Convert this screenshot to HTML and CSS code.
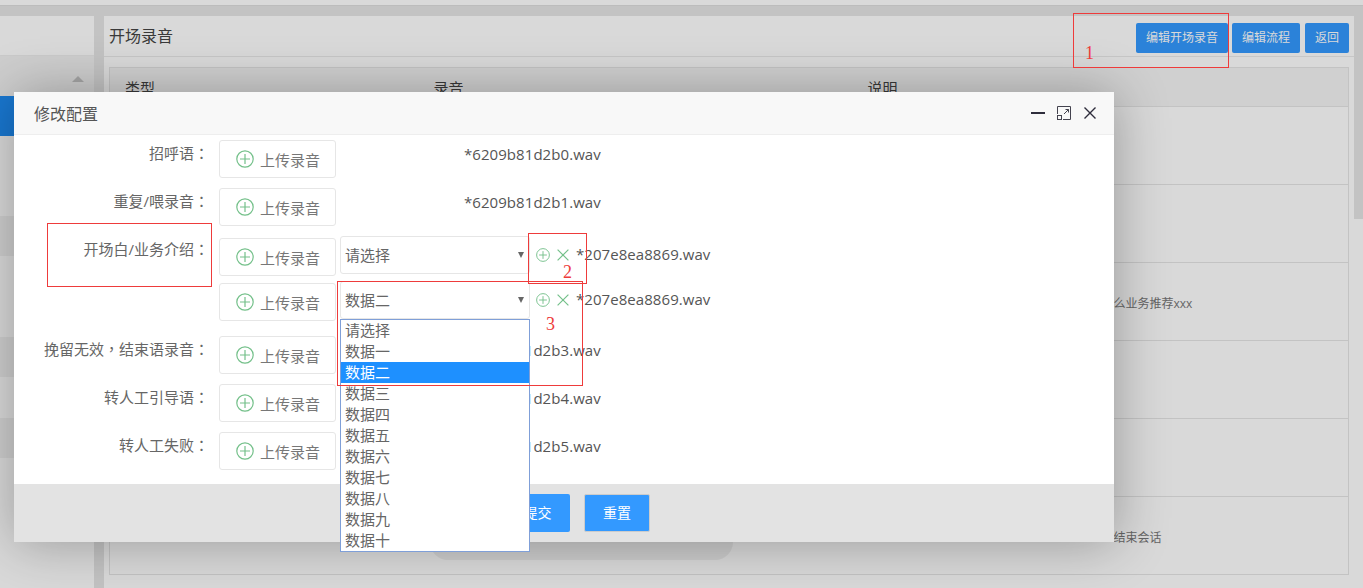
FILE: index.html
```html
<!DOCTYPE html>
<html lang="zh-CN">
<head>
  <meta charset="UTF-8" />
  <title>开场录音</title>
  <link rel="stylesheet" href="styles.css">
</head>
<body>
  <svg class="sprites" width="0" height="0">
    <symbol id="icon-plus" viewBox="0 0 18 18">
      <circle cx="9" cy="9" r="8.2" fill="none" stroke="currentColor" stroke-width="1.2" />
      <path d="M9 4v10M4 9h10" fill="none" stroke="currentColor" stroke-width="1.2" />
    </symbol>
    <symbol id="icon-del" viewBox="0 0 12 12">
      <path d="M.6.6l10.8 10.8M11.4.6L.6 11.4" fill="none" stroke="currentColor" stroke-width="1.2" />
    </symbol>
  </svg>

  <div class="topbar"></div>

  <div class="layout">
    <aside class="sidebar">
      <div class="side-head"></div>
      <div class="side-group"><span class="side-arrow"></span></div>
      <div class="side-item active"></div>
      <div class="side-item"></div>
      <div class="side-item"></div>
      <div class="side-group"></div>
      <div class="side-item"></div>
      <div class="side-item tall"></div>
      <div class="side-group"></div>
      <div class="side-item tall"></div>
      <div class="side-group"></div>
    </aside>

    <main class="panel">
      <div class="panel-head">
        <h1>开场录音</h1>
        <div class="panel-actions">
          <a class="btn">编辑开场录音</a>
          <a class="btn">编辑流程</a>
          <a class="btn">返回</a>
        </div>
      </div>
      <table class="records">
        <thead>
          <tr><th class="col-type">类型</th><th class="col-file">录音</th><th>说明</th></tr>
        </thead>
        <tbody>
          <tr><td></td><td></td><td></td></tr>
          <tr><td></td><td></td><td></td></tr>
          <tr><td></td><td></td><td class="note">么业务推荐xxx</td></tr>
          <tr><td></td><td></td><td></td></tr>
          <tr><td></td><td></td><td></td></tr>
          <tr><td></td><td></td><td class="note">结束会话</td></tr>
        </tbody>
      </table>
    </main>

    <div class="scrollbar"><div class="scroll-thumb"></div></div>
  </div>

  <div class="shade"></div>
  <div class="press-shadow"></div>

  <section class="modal">
    <header class="modal-head">
      <h2>修改配置</h2>
      <div class="modal-tools">
        <svg class="tool" width="16" height="16" viewBox="0 0 16 16"><path d="M1 8h14" stroke="#2e2d3c" stroke-width="2" fill="none" /></svg>
        <svg class="tool" width="16" height="16" viewBox="0 0 16 16"><path d="M1.5 9V1.5h13v13H7M9.5 4.5h3v3M12.5 4.5L8 9" stroke="#44434f" stroke-width="1" fill="none" /><rect x="1.5" y="10.5" width="4" height="4" stroke="#44434f" fill="none" /></svg>
        <svg class="tool" width="16" height="16" viewBox="0 0 16 16"><path d="M2.5 2.5l11 11M13.5 2.5l-11 11" stroke="#2e2d3c" stroke-width="1.4" fill="none" /></svg>
      </div>
    </header>

    <form class="modal-body">
      <div class="row">
        <label class="row-label" lang="zh-Hant">招呼语：</label>
        <a class="upload"><svg class="upload-icon"><use href="#icon-plus" /></svg>上传录音</a>
        <span class="file file-solo">*6209b81d2b0.wav</span>
      </div>
      <div class="row">
        <label class="row-label" lang="zh-Hant">重复/喂录音：</label>
        <a class="upload"><svg class="upload-icon"><use href="#icon-plus" /></svg>上传录音</a>
        <span class="file file-solo">*6209b81d2b1.wav</span>
      </div>
      <div class="row row-multi">
        <label class="row-label" lang="zh-Hant">开场白/业务介绍：</label>
        <div class="subrows">
          <div class="subrow">
            <a class="upload"><svg class="upload-icon"><use href="#icon-plus" /></svg>上传录音</a>
            <div class="picker"><span>请选择</span><i class="picker-arrow"></i></div>
            <svg class="mini-add"><use href="#icon-plus" /></svg>
            <svg class="mini-del"><use href="#icon-del" /></svg>
            <span class="file">*207e8ea8869.wav</span>
          </div>
          <div class="subrow">
            <a class="upload"><svg class="upload-icon"><use href="#icon-plus" /></svg>上传录音</a>
            <div class="picker open">
              <span>数据二</span><i class="picker-arrow"></i>
              <ul class="picker-list">
                <li>请选择</li>
                <li>数据一</li>
                <li class="selected">数据二</li>
                <li>数据三</li>
                <li>数据四</li>
                <li>数据五</li>
                <li>数据六</li>
                <li>数据七</li>
                <li>数据八</li>
                <li>数据九</li>
                <li>数据十</li>
              </ul>
            </div>
            <svg class="mini-add"><use href="#icon-plus" /></svg>
            <svg class="mini-del"><use href="#icon-del" /></svg>
            <span class="file">*207e8ea8869.wav</span>
          </div>
        </div>
      </div>
      <div class="row">
        <label class="row-label" lang="zh-Hant">挽留无效，结束语录音：</label>
        <a class="upload"><svg class="upload-icon"><use href="#icon-plus" /></svg>上传录音</a>
        <span class="file file-solo">*6209b81d2b3.wav</span>
      </div>
      <div class="row">
        <label class="row-label" lang="zh-Hant">转人工引导语：</label>
        <a class="upload"><svg class="upload-icon"><use href="#icon-plus" /></svg>上传录音</a>
        <span class="file file-solo">*6209b81d2b4.wav</span>
      </div>
      <div class="row">
        <label class="row-label" lang="zh-Hant">转人工失败：</label>
        <a class="upload"><svg class="upload-icon"><use href="#icon-plus" /></svg>上传录音</a>
        <span class="file file-solo">*6209b81d2b5.wav</span>
      </div>
    </form>

    <footer class="modal-foot">
      <a class="foot-btn">提交</a>
      <a class="foot-btn foot-btn-reset">重置</a>
    </footer>
  </section>

  <div class="mark mark-actions"><span class="mark-num">1</span></div>
  <div class="mark mark-label"></div>
  <div class="mark mark-icons"><span class="mark-num">2</span></div>
  <div class="mark mark-picker"><span class="mark-num">3</span></div>
</body>
</html>
```

FILE: styles.css
```css
* {
  margin: 0;
  padding: 0;
  box-sizing: border-box;
}

html, body {
  height: 100%;
  overflow: hidden;
}

body {
  font-family: "Open Sans", "Noto Sans CJK SC", sans-serif;
  font-size: 15px;
  color: #666;
  background: #e5e5e5;
}

.sprites {
  position: absolute;
}

/* page behind the dialog */
.topbar {
  height: 6px;
  background: #fff;
  border-bottom: 1px solid #ddd;
}

.layout {
  display: flex;
  padding-top: 10px;
  height: 582px;
}

.sidebar {
  width: 94px;
  background: #fff;
}

.side-head {
  height: 40px;
  border-bottom: 1px solid #eee;
}

.side-group {
  position: relative;
  height: 40px;
  background: #f2f2f2;
}

.side-item {
  height: 40px;
}

.side-item.tall {
  height: 41px;
}

.side-item.active {
  background: #1e8cf5;
}

.side-arrow {
  position: absolute;
  left: 72px;
  top: 20px;
  border-left: 6px solid transparent;
  border-right: 6px solid transparent;
  border-bottom: 6px solid #c4c4c4;
}

.panel {
  width: 1250px;
  margin-left: 10px;
  padding: 0 5px;
  background: #fff;
}

.panel-head {
  display: flex;
  justify-content: space-between;
  align-items: center;
  height: 41px;
  margin: 0 -5px;
  padding: 0 5px;
  border-bottom: 1px solid #eaeaea;
}

.panel-head h1 {
  padding-bottom: 2px;
  font-size: 16px;
  font-weight: normal;
  color: #444;
}

.panel-actions {
  display: flex;
  gap: 4px;
  margin-top: 4px;
}

.btn {
  height: 30px;
  padding: 0 10px;
  line-height: 30px;
  font-size: 12px;
  color: #fff;
  background: #3399ff;
  border-radius: 2px;
}

.btn:last-child {
  margin-left: 1px;
}

.records {
  width: 1240px;
  margin-top: 10px;
  border-collapse: collapse;
  table-layout: fixed;
}

.records th, .records td {
  padding: 0 15px;
  border-top: 1px solid #e5e5e5;
  border-bottom: 1px solid #e5e5e5;
}

.records th {
  height: 39px;
  text-align: left;
  font-weight: normal;
  font-size: 15px;
  color: #444;
  background: #f5f5f5;
}

.records td {
  height: 78px;
  font-size: 12px;
  color: #777;
}

.records th:last-child, .records td:last-child {
  border-right: 1px solid #e5e5e5;
}

.records th:first-child, .records td:first-child {
  border-left: 1px solid #e5e5e5;
}

.records th.col-type {
  width: 309px;
}

.records th.col-file {
  width: 434px;
}

.records td.note {
  padding: 2px 0 0 261px;
}

.scrollbar {
  width: 9px;
  margin-top: -10px;
  background: #fff;
}

.scroll-thumb {
  height: 213px;
  background: #e5e5e5;
}

.shade {
  position: absolute;
  inset: 0;
  background: rgba(0, 0, 0, .15);
}

.press-shadow {
  position: absolute;
  left: 430px;
  top: 520px;
  width: 303px;
  height: 40px;
  border-radius: 0 0 18px 18px;
  background: rgba(0, 0, 0, .06);
}

/* dialog */
.modal {
  position: absolute;
  left: 14px;
  top: 92px;
  width: 1100px;
  height: 450px;
  display: flex;
  flex-direction: column;
  background: #fff;
  box-shadow: 1px 1px 50px rgba(0, 0, 0, .3);
}

.modal-head {
  display: flex;
  justify-content: space-between;
  align-items: center;
  height: 43px;
  padding: 0 16px 0 20px;
  background: #f8f8f8;
  border-bottom: 1px solid #eee;
}

.modal-head h2 {
  font-size: 16px;
  font-weight: normal;
  color: #555;
}

.modal-tools {
  display: flex;
  gap: 10px;
}

.modal-body {
  flex: 1;
  padding-top: 5px;
}

.row {
  display: flex;
  height: 38px;
  margin-bottom: 10px;
}

.row-multi {
  height: 85px;
  margin-bottom: 15px;
}

.row-label {
  width: 195px;
  margin-right: 10px;
  line-height: 26px;
  text-align: right;
  font-family: "Open Sans", "Noto Sans CJK TC", sans-serif;
  color: #666;
}

.upload {
  display: flex;
  align-items: center;
  flex: none;
  width: 117px;
  height: 38px;
  padding-left: 16px;
  color: #777;
  background: #fff;
  border: 1px solid #e6e6e6;
  border-radius: 3px;
}

.upload-icon {
  width: 18px;
  height: 18px;
  margin-right: 6px;
  color: #74c08a;
}

.file {
  line-height: 28px;
  letter-spacing: .06px;
  color: #555;
}

.file-solo {
  margin-left: 128px;
}

.subrows {
  display: flex;
  flex-direction: column;
  gap: 5px;
}

.subrow {
  display: flex;
  align-items: flex-start;
  height: 40px;
}

.subrow .upload {
  margin-top: 2px;
}

.subrow .file {
  margin-left: 7px;
  margin-top: 4px;
}

.picker {
  position: relative;
  width: 190px;
  height: 38px;
  margin-left: 4px;
  padding-left: 4px;
  line-height: 37px;
  background: #fff;
  border: 1px solid #e6e6e6;
  border-radius: 3px;
}

.picker-arrow {
  position: absolute;
  right: 5px;
  top: 15px;
  border-left: 3px solid transparent;
  border-right: 3px solid transparent;
  border-top: 6px solid #666;
}

.picker-list {
  position: absolute;
  z-index: 3;
  left: -1px;
  top: 37px;
  width: 190px;
  list-style: none;
  background: #fff;
  border: 1px solid #7f9fd8;
}

.picker-list li {
  height: 21px;
  padding-left: 4px;
  line-height: 21px;
}

.picker-list li.selected {
  color: #fff;
  background: #1e90ff;
}

.mini-add {
  width: 14px;
  height: 14px;
  margin: 12px 0 0 6px;
  color: #74c08a;
}

.mini-del {
  width: 12px;
  height: 12px;
  margin: 13px 0 0 7px;
  color: #74c08a;
}

.modal-foot {
  display: flex;
  gap: 14px;
  height: 58px;
  padding: 10px 0 0 491px;
  background: #e3e3e3;
}

.foot-btn {
  width: 65px;
  height: 38px;
  line-height: 38px;
  text-align: center;
  font-size: 14px;
  color: #fff;
  background: #3399ff;
  border-radius: 2px;
}

.foot-btn-reset {
  width: 66px;
  border: 1px solid #ccc;
  line-height: 36px;
}

/* red notes drawn over the screenshot */
.mark {
  position: absolute;
  z-index: 5;
  border: 1px solid #ee3b3b;
}

.mark-num {
  position: absolute;
  font-family: "Liberation Serif", serif;
  font-size: 18px;
  line-height: 20px;
  color: #ee3b3b;
}

.mark-actions {
  left: 1073px;
  top: 13px;
  width: 156px;
  height: 55px;
}

.mark-actions .mark-num {
  left: 11px;
  top: 29px;
}

.mark-label {
  left: 47px;
  top: 223px;
  width: 165px;
  height: 64px;
}

.mark-icons {
  left: 528px;
  top: 233px;
  width: 59px;
  height: 51px;
}

.mark-icons .mark-num {
  left: 34px;
  top: 28px;
}

.mark-picker {
  left: 337px;
  top: 281px;
  width: 246px;
  height: 105px;
}

.mark-picker .mark-num {
  left: 208px;
  top: 32px;
}
```
